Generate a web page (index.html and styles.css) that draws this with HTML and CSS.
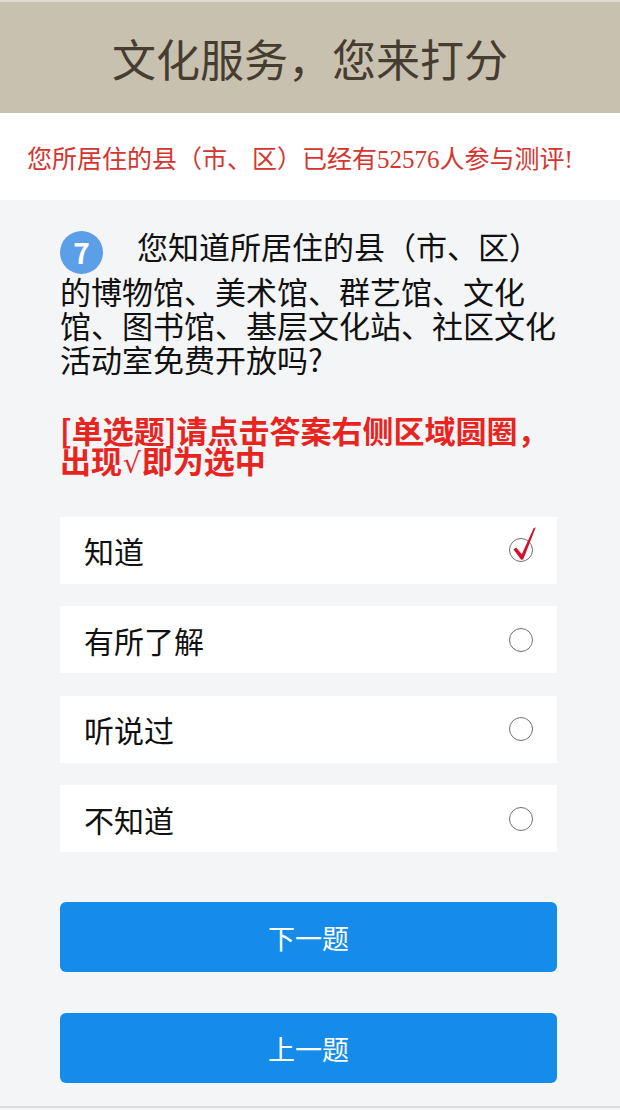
FILE: index.html
```html
<!DOCTYPE html>
<html lang="zh-CN">
<head>
<meta charset="utf-8">
<title>文化服务，您来打分</title>
<link rel="stylesheet" href="styles.css">
</head>
<body>
<header class="header"><h1 class="title">文化服务，您来打分</h1></header>
<div class="notice">您所居住的县（市、区）已经有52576人参与测评!</div>
<main class="main">
  <p class="question"><span class="badge">7</span>您知道所居住的县（市、区）的博物馆、美术馆、群艺馆、文化馆、图书馆、基层文化站、社区文化活动室免费开放吗?</p>
  <p class="hint">[单选题]请点击答案右侧区域圆圈，出现<span class="sqrt">√</span>即为选中</p>
  <ul class="options">
    <li class="option"><span class="label">知道</span><span class="radio checked"><svg class="tick" width="32" height="40" viewBox="0 0 32 40"><path d="M4.5 23.5 L7.2 21.6 L12.8 28.2 L24.6 2.2 L26.8 1.2 L14.2 33.6 L12.2 33.8 Z" fill="#d4102a"/></svg></span></li>
    <li class="option"><span class="label">有所了解</span><span class="radio"></span></li>
    <li class="option"><span class="label">听说过</span><span class="radio"></span></li>
    <li class="option"><span class="label">不知道</span><span class="radio"></span></li>
  </ul>
  <div class="actions">
    <button class="btn">下一题</button>
    <button class="btn">上一题</button>
  </div>
</main>
<div class="bottom-line"></div>
</body>
</html>
```
FILE: styles.css
```css
* { box-sizing: border-box; }
html, body { margin: 0; padding: 0; }
body {
  background: #f4f5f7;
  font-family: "Noto Sans CJK SC", "Noto Sans", sans-serif;
  color: #111;
  width: 620px;
  height: 1110px;
  overflow: hidden;
}
.header {
  height: 113px;
  background: #c8c1b0;
  border-top: 2px solid #dedbd4;
  display: flex;
  align-items: center;
  justify-content: center;
}
.title {
  margin: 0;
  font-size: 44px;
  font-weight: 400;
  color: #463c30;
}
.notice {
  height: 87px;
  background: #fff;
  display: flex;
  align-items: center;
  padding-left: 27px;
  font-family: "Liberation Serif", "Noto Sans CJK SC", serif;
  font-size: 25px;
  color: #d5352e;
}
.main {
  padding: 29px 63px 0 60px;
}
.question {
  margin: 0;
  font-size: 31px;
  line-height: 34px;
  color: #111;
}
.badge {
  display: inline-flex;
  align-items: center;
  justify-content: center;
  width: 43px;
  height: 43px;
  border-radius: 50%;
  background: #5b9fe8;
  color: #fff;
  font-size: 28px;
  font-weight: 700;
  vertical-align: -5px;
  margin-right: 34px;
  line-height: 1;
}
.hint {
  margin: 39px 0 0;
  font-size: 31px;
  line-height: 30px;
  font-weight: 700;
  color: #e8241f;
}
.sqrt {
  font-family: "DejaVu Sans", sans-serif;
  font-weight: 400;
  font-size: 28px;
  line-height: 1;
  margin: 0 1px;
}
.options {
  list-style: none;
  margin: 39px 0 0;
  padding: 0;
  display: flex;
  flex-direction: column;
  gap: 22.5px;
}
.option {
  height: 67px;
  background: #fff;
  display: flex;
  align-items: center;
  justify-content: space-between;
  padding: 0 24px;
}
.label {
  font-size: 30px;
  color: #111;
}
.radio {
  position: relative;
  width: 24px;
  height: 24px;
  border: 1.5px solid #707070;
  border-radius: 50%;
}
.tick {
  position: absolute;
  left: -1.5px;
  top: -13.5px;
}
.actions {
  margin-top: 50px;
  display: flex;
  flex-direction: column;
  gap: 41px;
}
.btn {
  height: 70px;
  border: none;
  border-radius: 6px;
  background: #168cea;
  color: #fff;
  font-family: "Noto Sans CJK SC", sans-serif;
  font-size: 27px;
  cursor: pointer;
}
.bottom-line {
  margin-top: 23px;
  height: 2px;
  background: #dcdcdc;
}
```
